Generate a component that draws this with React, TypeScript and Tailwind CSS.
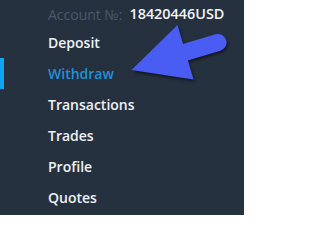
import React from "react";

const items = ["Deposit", "Withdraw", "Transactions", "Trades", "Profile", "Quotes"];

export default function App() {
  return (
    <div
      className="relative w-[244px] h-[215px] overflow-hidden bg-[#263140]"
      style={{ fontFamily: '"Open Sans", "Noto Sans", sans-serif' }}
    >
      <div className="flex flex-col pt-[1px]">
        <div className="h-[26px] flex items-center pl-[48px] whitespace-nowrap">
          <span className="text-[14px] text-[#4b586b]">Account №:</span>
          <span className="ml-[7px] text-[14.4px] font-semibold text-[#f2f4f7]">18420446USD</span>
        </div>
        {items.map((it) => {
          const active = it === "Withdraw";
          return (
            <div key={it} className="relative h-[31px] flex items-center pl-[48px]">
              {active && <div className="absolute left-0 top-0 h-full w-[4px] bg-[#0ea5f3]" />}
              <span
                className={
                  "text-[14px] font-semibold " + (active ? "text-[#2290d8]" : "text-[#eef1f5]")
                }
              >
                {it}
              </span>
            </div>
          );
        })}
      </div>
      <svg
        className="absolute left-0 top-0"
        width="244"
        height="215"
        viewBox="0 0 244 215"
        style={{ filter: "drop-shadow(1px 2px 1.5px rgba(0,0,0,0.55))" }}
      >
        <line x1="186" y1="52" x2="218" y2="42.5" stroke="#4a5df2" strokeWidth="17" strokeLinecap="round" />
        <polygon points="131.5,70 177.5,25 193.5,79.5" fill="#4a5df2" />
      </svg>
    </div>
  );
}
